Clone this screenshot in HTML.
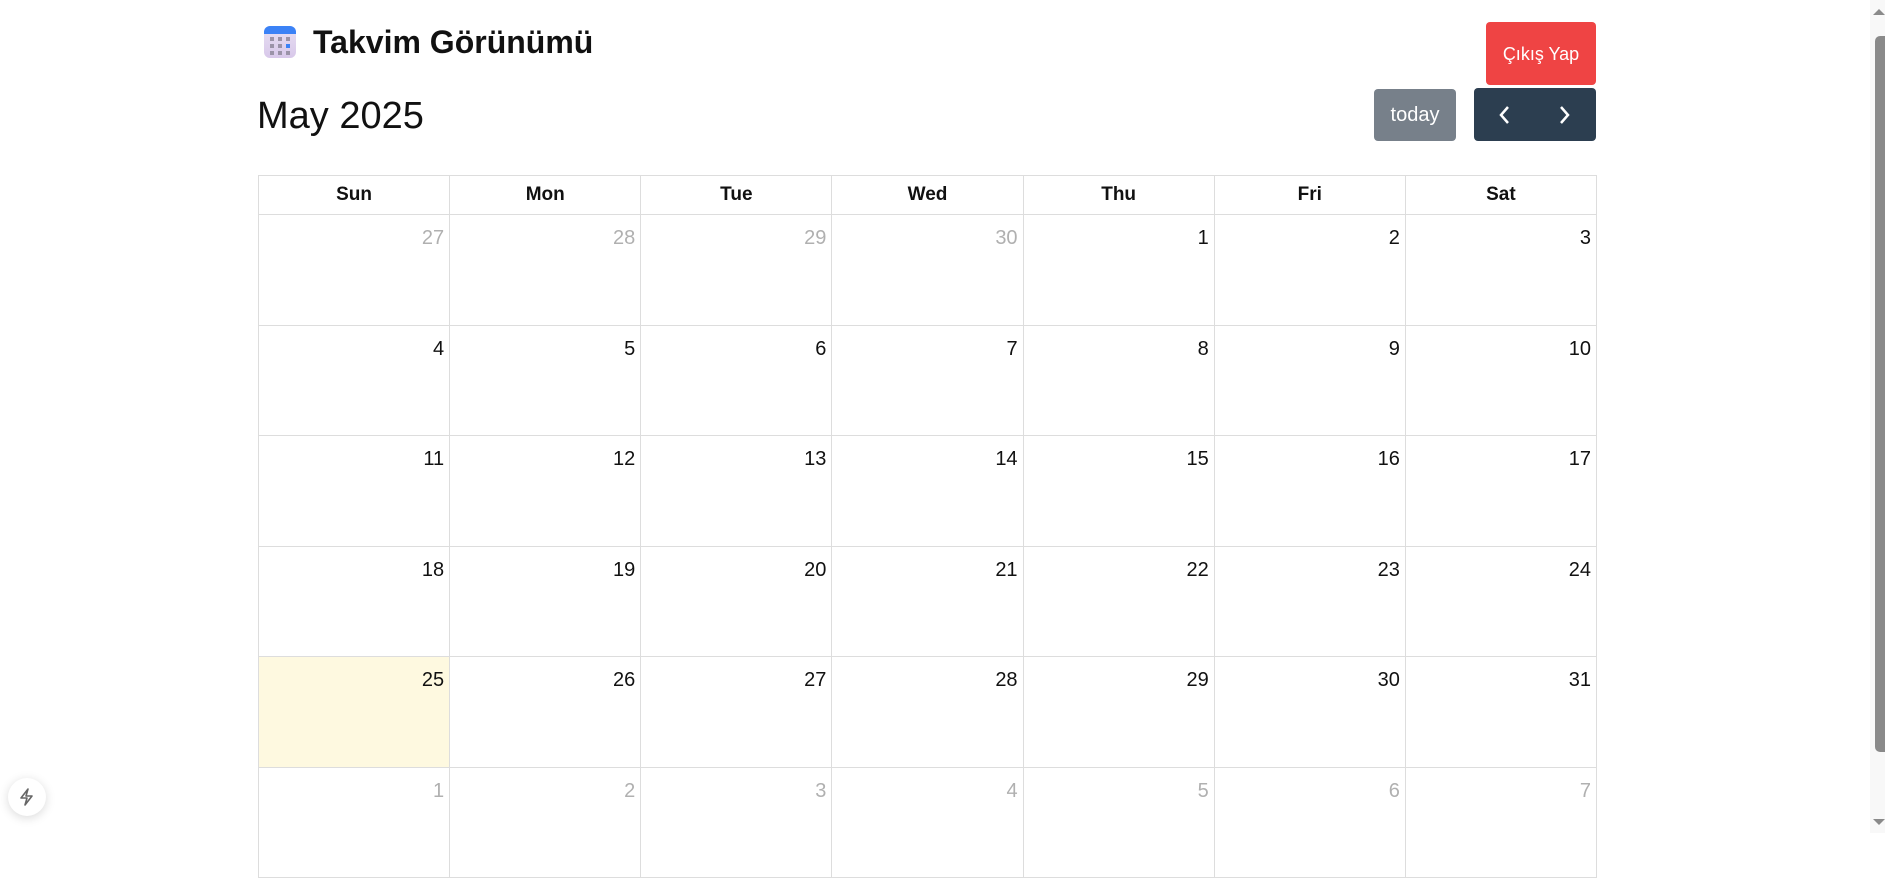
<!DOCTYPE html>
<html><head><meta charset="utf-8">
<style>
html,body{margin:0;padding:0;width:1885px;height:833px;overflow:hidden;background:#fff;font-family:"Liberation Sans",Arial,sans-serif;color:#111;}
.abs{position:absolute;}
h1{position:absolute;left:313px;top:22px;margin:0;font-size:32px;font-weight:bold;line-height:40px;color:#111;}
.month{position:absolute;left:257px;top:93px;font-size:38px;line-height:46px;color:#111;}
.logout{position:absolute;left:1486px;top:22px;width:110px;height:63px;background:#ef4444;border-radius:4px;color:#fff;font-size:18px;line-height:64px;text-align:center;}
.today{position:absolute;left:1374px;top:89px;width:82px;height:52px;background:#77808a;border-radius:4px;color:#fff;font-size:20px;line-height:52px;text-align:center;}
.nav{position:absolute;left:1474px;top:88px;width:122px;height:53px;background:#2c3e50;border-radius:4px;}
table{position:absolute;left:258px;top:175px;border-collapse:collapse;table-layout:fixed;width:1339px;}
th,td{border:1px solid #ddd;padding:0;}
th{height:38px;font-size:19px;font-weight:bold;text-align:center;}
td{height:109.5px;vertical-align:top;text-align:right;font-size:20px;}
td span{display:block;padding:12px 5px 0 0;line-height:22px;}
td.o span{color:#b0b0b0;}
td.t{background:#fef9e0;}
.sb{position:absolute;left:1870px;top:0;width:15px;height:833px;background:#f8f8f8;}
.thumb{position:absolute;left:1875px;top:36px;width:10px;height:716px;background:#8a8a8a;border-radius:5px 0 0 5px;}
</style></head><body>
<svg class="abs" style="left:263px;top:25px" width="34" height="34" viewBox="0 0 34 34">
<defs><linearGradient id="g" x1="0" y1="0" x2="0" y2="1"><stop offset="0" stop-color="#e8e0f2"/><stop offset="1" stop-color="#d8c8ea"/></linearGradient></defs>
<rect x="1" y="1" width="32" height="32" rx="6" fill="url(#g)"/>
<path d="M1 9 V7 a6 6 0 0 1 6 -6 h20 a6 6 0 0 1 6 6 V9 Z" fill="#3b82f6"/>
<g fill="#9b93a8"><rect x="7" y="12" width="4" height="4"/><rect x="15" y="12" width="4" height="4"/><rect x="23" y="12" width="4" height="4"/><rect x="7" y="19" width="4" height="4"/><rect x="15" y="19" width="4" height="4"/><rect x="7" y="26" width="4" height="4"/><rect x="15" y="26" width="4" height="4"/><rect x="23" y="26" width="4" height="4"/></g>
<rect x="23" y="19" width="4" height="4" fill="#3b82f6"/>
</svg>
<h1>Takvim Görünümü</h1>
<div class="month">May 2025</div>
<div class="logout">Çıkış Yap</div>
<div class="today">today</div>
<div class="nav">
<svg class="abs" style="left:24px;top:17px" width="14" height="20" viewBox="0 0 14 20"><path d="M10 2 L3 10 L10 18" fill="none" stroke="#fff" stroke-width="2.5"/></svg>
<svg class="abs" style="left:83px;top:17px" width="14" height="20" viewBox="0 0 14 20"><path d="M4 2 L11 10 L4 18" fill="none" stroke="#fff" stroke-width="2.5"/></svg>
</div>
<table>
<colgroup><col><col><col><col><col><col><col></colgroup>
<tr><th>Sun</th><th>Mon</th><th>Tue</th><th>Wed</th><th>Thu</th><th>Fri</th><th>Sat</th></tr>
<tr><td class="o"><span>27</span></td><td class="o"><span>28</span></td><td class="o"><span>29</span></td><td class="o"><span>30</span></td><td><span>1</span></td><td><span>2</span></td><td><span>3</span></td></tr>
<tr><td><span>4</span></td><td><span>5</span></td><td><span>6</span></td><td><span>7</span></td><td><span>8</span></td><td><span>9</span></td><td><span>10</span></td></tr>
<tr><td><span>11</span></td><td><span>12</span></td><td><span>13</span></td><td><span>14</span></td><td><span>15</span></td><td><span>16</span></td><td><span>17</span></td></tr>
<tr><td><span>18</span></td><td><span>19</span></td><td><span>20</span></td><td><span>21</span></td><td><span>22</span></td><td><span>23</span></td><td><span>24</span></td></tr>
<tr><td class="t"><span>25</span></td><td><span>26</span></td><td><span>27</span></td><td><span>28</span></td><td><span>29</span></td><td><span>30</span></td><td><span>31</span></td></tr>
<tr><td class="o"><span>1</span></td><td class="o"><span>2</span></td><td class="o"><span>3</span></td><td class="o"><span>4</span></td><td class="o"><span>5</span></td><td class="o"><span>6</span></td><td class="o"><span>7</span></td></tr>
</table>
<div class="abs" style="left:8px;top:778px;width:38px;height:38px;border-radius:50%;background:#fff;box-shadow:0 2px 10px rgba(0,0,0,0.15);"></div>
<svg class="abs" style="left:17px;top:787px" width="20" height="20" viewBox="0 0 20 20"><path d="M11 2 L4 11 H10 L8 18 L15 9 H9 Z" fill="none" stroke="#666" stroke-width="1.6" stroke-linejoin="round"/></svg>
<div class="sb"></div>
<div class="thumb"></div>
<svg class="abs" style="left:1873px;top:8px" width="12" height="8"><path d="M0 7 L6 1 L12 7 Z" fill="#8a8a8a"/></svg>
<svg class="abs" style="left:1873px;top:818px" width="12" height="8"><path d="M0 1 L6 7 L12 1 Z" fill="#8a8a8a"/></svg>
</body></html>
